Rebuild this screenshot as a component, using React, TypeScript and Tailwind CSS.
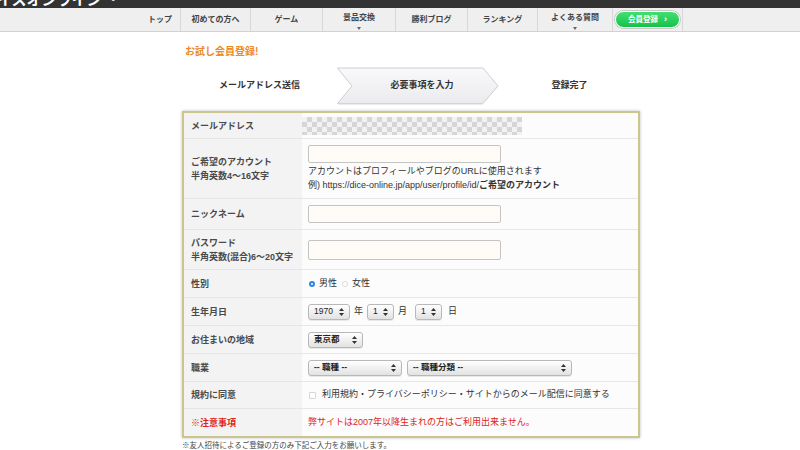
import React from 'react';

const navItems = [
  { label: 'トップ', w: 'w-[40px]' },
  { label: '初めての方へ', w: 'w-[70px]' },
  { label: 'ゲーム', w: 'w-[72px]' },
  { label: '景品交換', w: 'w-[73px]', drop: true },
  { label: '勝利ブログ', w: 'w-[72px]' },
  { label: 'ランキング', w: 'w-[70px]' },
  { label: 'よくある質問', w: 'w-[75px]', drop: true },
];

function UpDown() {
  return (
    <svg width="5" height="8" viewBox="0 0 5 8" className="shrink-0">
      <polygon points="2.5,0 5,3 0,3" fill="#333" />
      <polygon points="0,5 5,5 2.5,8" fill="#333" />
    </svg>
  );
}

function Select({ className, children }: { className: string; children: React.ReactNode }) {
  return (
    <div
      className={`${className} h-[16px] flex items-center justify-between px-[5px] rounded-[3px] border border-[#b8b8b8] bg-gradient-to-b from-[#ffffff] to-[#e2e2e2] text-[8.5px] text-[#222] shadow-[0_1px_0_rgba(0,0,0,0.08)]`}
    >
      <span>{children}</span>
      <UpDown />
    </div>
  );
}

function Row({
  label,
  className,
  children,
  red,
}: {
  label: React.ReactNode;
  className: string;
  children?: React.ReactNode;
  red?: boolean;
}) {
  return (
    <div className={`grid grid-cols-[118px_1fr] border-t border-[#e6e6e6] first:border-t-0 ${className}`}>
      <div
        className={`bg-[#f3f3f3] flex flex-col justify-center pl-[7px] text-[9px] leading-[14px] font-bold ${
          red ? 'text-[#e0241b]' : 'text-[#4a4a4a]'
        }`}
      >
        {label}
      </div>
      <div className="bg-[#fcfcfc] flex flex-col justify-center text-[9px] text-[#333]">{children}</div>
    </div>
  );
}

function TextInput() {
  return <div className="w-[193px] h-[18px] rounded-[2px] border border-[#c4c4c4] bg-[#fffcf7]" />;
}

export default function App() {
  return (
    <div className="w-[800px] h-[450px] overflow-hidden bg-white font-['Liberation_Sans','Noto_Sans_CJK_JP',sans-serif]">
      {/* top bar, cut off */}
      <div className="h-[8px] bg-[#333333] overflow-hidden flex items-end">
        <span className="ml-[-18px] text-[15px] leading-[17px] font-bold text-white whitespace-nowrap">
          ダイスオンライン ・
        </span>
      </div>

      {/* nav */}
      <nav className="h-[24px] bg-[#efefef] border-b border-[#d2d2d2] flex">
        <div className="ml-[140px] flex h-full">
          {navItems.map((item, i) => (
            <div
              key={item.label}
              className={`${item.w} h-full flex flex-col items-center justify-center text-[8px] font-bold text-[#444] ${
                i > 0 ? 'border-l border-[#d8d8d8]' : ''
              }`}
            >
              <span className={item.drop ? 'mt-[2px]' : ''}>{item.label}</span>
              {item.drop && (
                <svg width="4" height="3" viewBox="0 0 4 3" className="mt-[3px]">
                  <polygon points="0,0 4,0 2,3" fill="#666" />
                </svg>
              )}
            </div>
          ))}
          <div className="w-[71px] h-full flex items-center justify-center border-l border-r border-[#d8d8d8]">
            <div className="w-[65px] h-[17px] rounded-full bg-gradient-to-b from-[#3fe070] to-[#12c148] border-[1.5px] border-white shadow-[0_0_0_1px_#c9c9c9] flex items-center justify-center gap-[6px] text-white text-[7.5px] font-bold">
              <span>会員登録</span>
              <span className="text-[9px] leading-none">›</span>
            </div>
          </div>
        </div>
      </nav>

      <div className="ml-[182px] w-[458px]">
        <h1 className="mt-[13px] ml-[3px] text-[10px] leading-[14px] font-bold text-[#ec8a26]">お試し会員登録!</h1>

        {/* steps */}
        <div className="mt-[8px] flex h-[38px] items-center text-[9px] font-bold text-[#333]">
          <div className="w-[155px] text-center">メールアドレス送信</div>
          <div className="w-[162px] h-[38px] relative flex items-center justify-center">
            <svg width="162" height="38" viewBox="0 0 162 38" className="absolute inset-0">
              <defs>
                <linearGradient id="stepg" x1="0" y1="0" x2="0" y2="1">
                  <stop offset="0" stopColor="#f9f9fb" />
                  <stop offset="1" stopColor="#ebebef" />
                </linearGradient>
              </defs>
              <polygon
                points="0.5,1 146,1 161,19 146,36.5 0.5,36.5 15,19"
                fill="url(#stepg)"
                stroke="#cdcdd2"
                strokeWidth="1"
              />
              <line x1="1" y1="37" x2="146" y2="37" stroke="#d8d8dc" strokeWidth="1" />
            </svg>
            <span className="relative ml-[8px]">必要事項を入力</span>
          </div>
          <div className="flex-1 text-center">登録完了</div>
        </div>

        {/* form box */}
        <div className="mt-[6px] border-2 border-[#cbc58f] shadow-[0_0_3px_rgba(0,0,0,0.25)]">
          <Row label="メールアドレス" className="h-[25px]">
            <div className="w-[220px] h-[18px] blur-[0.6px] bg-[repeating-conic-gradient(#d6d6d6_0_25%,#f2f2f2_0_50%)] bg-[length:10px_10px]" />
          </Row>
          <Row
            label={
              <>
                <span>ご希望のアカウント</span>
                <span>半角英数4〜16文字</span>
              </>
            }
            className="h-[60px]"
          >
            <div className="pl-[6px] leading-[14px]">
              <TextInput />
              <div className="mt-[1px]">アカウントはプロフィールやブログのURLに使用されます</div>
              <div>
                例) https://dice-online.jp/app/user/profile/id/<span className="font-bold">ご希望のアカウント</span>
              </div>
            </div>
          </Row>
          <Row label="ニックネーム" className="h-[31px]">
            <div className="pl-[6px]">
              <TextInput />
            </div>
          </Row>
          <Row
            label={
              <>
                <span>パスワード</span>
                <span>半角英数(混合)6〜20文字</span>
              </>
            }
            className="h-[40px]"
          >
            <div className="pl-[6px]">
              <div className="w-[193px] h-[20px] rounded-[2px] border border-[#c4c4c4] bg-[#fffcf7]" />
            </div>
          </Row>
          <Row label="性別" className="h-[28px]">
            <div className="pl-[7px] flex items-center">
              <span className="w-[6px] h-[6px] rounded-full border-[2px] border-[#2f86e0] bg-white" />
              <span className="ml-[4px]">男性</span>
              <span className="ml-[5px] w-[6px] h-[6px] rounded-full border border-[#dcdcdc] bg-white" />
              <span className="ml-[4px]">女性</span>
            </div>
          </Row>
          <Row label="生年月日" className="h-[28px]">
            <div className="pl-[6px] flex items-center gap-[4px]">
              <Select className="w-[42px]">1970</Select>
              <span>年</span>
              <Select className="w-[27px]">1</Select>
              <span className="mr-[4px]">月</span>
              <Select className="w-[27px]">1</Select>
              <span className="ml-[2px]">日</span>
            </div>
          </Row>
          <Row label="お住まいの地域" className="h-[28px]">
            <div className="pl-[6px] flex items-center">
              <Select className="w-[55px] font-bold">東京都</Select>
            </div>
          </Row>
          <Row label="職業" className="h-[28px]">
            <div className="pl-[6px] flex items-center gap-[5px]">
              <Select className="w-[94px] font-bold">-- 職種 --</Select>
              <Select className="w-[165px] font-bold">-- 職種分類 --</Select>
            </div>
          </Row>
          <Row label="規約に同意" className="h-[27px]">
            <div className="pl-[7px] flex items-center">
              <span className="w-[7px] h-[7px] border border-[#d6d6d6] bg-white rounded-[1px]" />
              <span className="ml-[6px]">利用規約・プライバシーポリシー・サイトからのメール配信に同意する</span>
            </div>
          </Row>
          <Row label="※注意事項" className="h-[28px]" red>
            <div className="pl-[6px] text-[#e0241b]">弊サイトは2007年以降生まれの方はご利用出来ません。</div>
          </Row>
        </div>

        <p className="mt-[3px] text-[7.5px] leading-[10px] text-[#444]">
          ※友人招待によるご登録の方のみ下記ご入力をお願いします。
        </p>
      </div>
    </div>
  );
}
